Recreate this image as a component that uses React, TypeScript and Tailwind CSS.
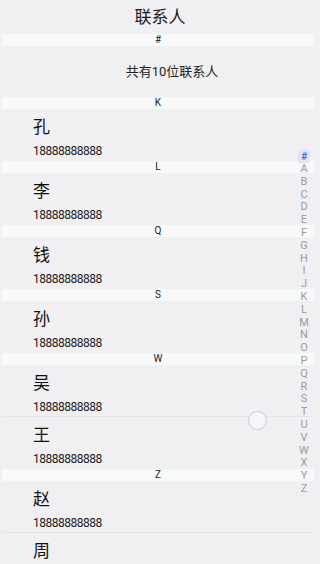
import React from 'react'

type Contact = { name: string; phone: string }

const sections: { letter: string; contacts: Contact[] }[] = [
  { letter: 'K', contacts: [{ name: '孔', phone: '18888888888' }] },
  { letter: 'L', contacts: [{ name: '李', phone: '18888888888' }] },
  { letter: 'Q', contacts: [{ name: '钱', phone: '18888888888' }] },
  { letter: 'S', contacts: [{ name: '孙', phone: '18888888888' }] },
  {
    letter: 'W',
    contacts: [
      { name: '吴', phone: '18888888888' },
      { name: '王', phone: '18888888888' },
    ],
  },
  {
    letter: 'Z',
    contacts: [
      { name: '赵', phone: '18888888888' },
      { name: '周', phone: '18888888888' },
    ],
  },
]

const indexLetters = ['#', ...'ABCDEFGHIJKLMNOPQRSTUVWXYZ'.split('')]

function SectionHeader({ label }: { label: string }) {
  return (
    <div className="h-[12px] bg-[#f8f9f9] text-center text-[10px] leading-[12px] text-[#222]">
      {label}
    </div>
  )
}

export default function App() {
  return (
    <div
      className="relative h-[564px] w-[320px] overflow-hidden bg-[#f0f0f3] text-[#1a1a1a]"
      style={{ fontFamily: 'Roboto, "Noto Sans CJK SC", sans-serif' }}
    >
      <div className="h-[34px] text-center text-[17px] leading-[34px] font-normal text-[#1a1a1a]">联系人</div>

      <div className="pl-[2px] pr-[6px]">
        <SectionHeader label="#" />
        <div className="flex h-[51px] items-center justify-center pl-[28px] text-[13px] text-[#222]">共有10位联系人</div>

        {sections.map((s) => (
          <div key={s.letter}>
            <SectionHeader label={s.letter} />
            {s.contacts.map((c, i) => (
              <div
                key={c.name}
                className={
                  i < s.contacts.length - 1
                    ? 'h-[52px] border-b border-[#e4e4e8] pl-[31px] pt-[7px]'
                    : 'h-[52px] pl-[31px] pt-[7px]'
                }
              >
                <div className="text-[17px] leading-[22px] text-[#111]">{c.name}</div>
                <div className="mt-[5px] text-[12px] leading-[16px] tracking-[-0.5px] text-[#222]">{c.phone}</div>
              </div>
            ))}
          </div>
        ))}
      </div>

      {/* alphabet index */}
      <div className="absolute top-[150px] right-[10px] flex w-[12px] flex-col items-center">
        {indexLetters.map((l) =>
          l === '#' ? (
            <div
              key={l}
              className="flex h-[13px] w-[12px] items-center justify-center rounded-[2px] bg-[#dfe4f6] text-[10px] leading-[13px] text-[#3355dd]"
            >
              {l}
            </div>
          ) : (
            <div key={l} className="h-[12.8px] text-[11px] leading-[12.8px] text-[#9a9a9e]">
              {l}
            </div>
          )
        )}
      </div>

      {/* touch indicator */}
      <div className="absolute top-[411px] left-[248px] h-[19px] w-[19px] rounded-full border-[1.5px] border-[#c6c6e6] bg-[#f6f6f9]" />
    </div>
  )
}
